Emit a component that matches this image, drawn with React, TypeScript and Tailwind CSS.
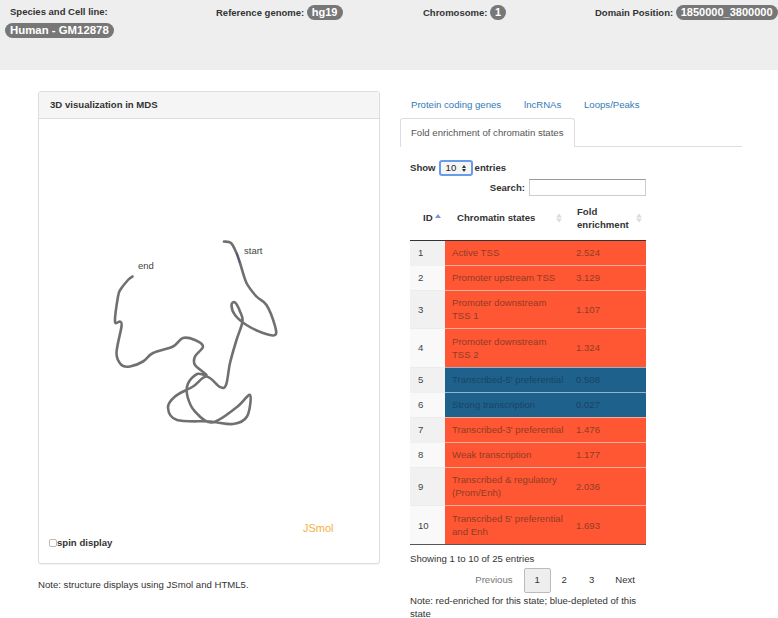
const points: [number, number][] = [
  [224, 241.5], [231, 243], [236.5, 253], [240, 263], [246.5, 283], [256.5, 296.5], [266.5, 305], [275, 326], [275, 335],
  [263, 333], [246.5, 325], [235, 315], [231.5, 305], [235, 302.5], [240, 311.5], [242.5, 321.5], [236.5, 340], [230, 363],
  [226, 385], [220, 387], [206.5, 376.5], [193, 386.5], [175, 396.5], [168, 408], [177, 420], [210, 421.5], [233, 424],
  [247, 416.5], [250, 395], [237, 407], [212, 422.5], [195, 411.5], [187.5, 396.5], [188, 383.5], [197, 374], [206.5, 375],
  [195, 365], [195, 356.5], [203, 346.5], [195, 340], [183, 338], [173, 346.5], [153, 353], [143, 361.5], [130, 366.5], [121.5, 365],
  [116.5, 353], [121.5, 326.5], [120, 321.5], [115, 321.5], [118, 296.5], [120.5, 289.5], [128, 280], [132.5, 276.5],
];

// catmull-rom through the traced points
function smoothPath(pts: [number, number][]) {
  let d = `M${pts[0][0]} ${pts[0][1]}`;
  for (let i = 0; i < pts.length - 1; i++) {
    const p0 = pts[Math.max(i - 1, 0)];
    const p1 = pts[i];
    const p2 = pts[i + 1];
    const p3 = pts[Math.min(i + 2, pts.length - 1)];
    const c1x = p1[0] + (p2[0] - p0[0]) / 6;
    const c1y = p1[1] + (p2[1] - p0[1]) / 6;
    const c2x = p2[0] - (p3[0] - p1[0]) / 6;
    const c2y = p2[1] - (p3[1] - p1[1]) / 6;
    d += ` C${c1x.toFixed(1)} ${c1y.toFixed(1)} ${c2x.toFixed(1)} ${c2y.toFixed(1)} ${p2[0]} ${p2[1]}`;
  }
  return d;
}

const rows = [
  { id: 1, state: "Active TSS", fold: "2.524", blue: false, tall: false },
  { id: 2, state: "Promoter upstream TSS", fold: "3.129", blue: false, tall: false },
  { id: 3, state: "Promoter downstream TSS 1", fold: "1.107", blue: false, tall: true },
  { id: 4, state: "Promoter downstream TSS 2", fold: "1.324", blue: false, tall: true },
  { id: 5, state: "Transcribed-5' preferential", fold: "0.508", blue: true, tall: false },
  { id: 6, state: "Strong transcription", fold: "0.027", blue: true, tall: false },
  { id: 7, state: "Transcribed-3' preferential", fold: "1.476", blue: false, tall: false },
  { id: 8, state: "Weak transcription", fold: "1.177", blue: false, tall: false },
  { id: 9, state: "Transcribed & regulatory (Prom/Enh)", fold: "2.036", blue: false, tall: true },
  { id: 10, state: "Transcribed 5' preferential and Enh", fold: "1.693", blue: false, tall: true },
];

function Badge({ children }: { children: React.ReactNode }) {
  return (
    <span className="inline-block rounded-full bg-[#777] px-[5px] text-[11px] leading-[15px] font-bold text-white">
      {children}
    </span>
  );
}

function SortArrows() {
  return (
    <span className="absolute right-1 top-1/2 flex -translate-y-1/2 flex-col gap-px">
      <span className="h-0 w-0 border-x-[3px] border-b-[4px] border-x-transparent border-b-[#ddd]" />
      <span className="h-0 w-0 border-x-[3px] border-t-[4px] border-x-transparent border-t-[#ddd]" />
    </span>
  );
}

export default function App() {
  return (
    <div className="h-[618px] w-[778px] overflow-hidden bg-white font-['Liberation_Sans',sans-serif] text-[9.6px] leading-[14px] text-[#333]">
      <div className="h-[70px] bg-[#eee] pl-[5px] pt-[5px] text-[9.5px] font-bold">
        <div className="flex">
          <div className="w-[211px] shrink-0 pl-[5px]">Species and Cell line:</div>
          <div className="w-[207px] shrink-0">Reference genome: <Badge>hg19</Badge></div>
          <div className="w-[172px] shrink-0">Chromosome: <Badge>1</Badge></div>
          <div className="shrink-0 whitespace-nowrap">Domain Position: <Badge>1850000_3800000</Badge></div>
        </div>
        <div className="mt-[3px]">
          <span className="inline-block rounded-full bg-[#777] px-[5px] text-[11.4px] leading-[15px] font-bold text-white">Human - GM12878</span>
        </div>
      </div>

      <div className="flex pt-[21px]">
        <div className="ml-[38px] w-[342px]">
          <div className="flex h-[473px] flex-col rounded-[3px] border border-[#ddd] shadow-[0_1px_1px_rgba(0,0,0,0.05)]">
            <div className="flex h-[27px] shrink-0 items-center rounded-t-[3px] border-b border-[#ddd] bg-[#f5f5f5] pl-[11px] font-bold">
              3D visualization in MDS
            </div>
            <div className="relative flex-1">
              <svg className="absolute left-[-39px] top-[-119px] h-[618px] w-[778px]" viewBox="0 0 778 618" fill="none">
                <path d={smoothPath(points)} stroke="#707070" strokeWidth="2.6" strokeLinecap="round" strokeLinejoin="round" />
                <path d="M236.5 253L240 263" stroke="#55557a" strokeWidth="1.6" />
              </svg>
              <span className="absolute left-[205px] top-[125px] text-[9.5px] text-[#444]">start</span>
              <span className="absolute left-[99px] top-[140px] text-[9.5px] text-[#444]">end</span>
              <span className="absolute left-[264px] top-[402px] text-[11px] text-[#f5b041]">JSmol</span>
              <label className="absolute bottom-[13px] left-[10px] flex items-center font-bold">
                <span className="h-[8px] w-[8px] rounded-[2px] border border-[#bbb] bg-white" />
                spin display
              </label>
            </div>
          </div>
          <p className="mt-[14px]">Note: structure displays using JSmol and HTML5.</p>
        </div>

        <div className="ml-[20px] w-[342px]">
          <div className="flex h-[27px] items-center pl-[11px] text-[#337ab7]">
            <span className="w-[113px]">Protein coding genes</span>
            <span className="w-[60px]">lncRNAs</span>
            <span>Loops/Peaks</span>
          </div>
          <div className="flex h-[29px] border-b border-[#ddd]">
            <div className="flex h-[29px] w-[175px] items-center rounded-t-[3px] border border-b-0 border-[#ddd] bg-white pl-[10px] text-[#555]">
              Fold enrichment of chromatin states
            </div>
          </div>

          <div className="ml-[10px] w-[236px]">
            <div className="mt-[13px] flex h-[16px] items-center font-bold">
              Show
              <span className="ml-[3px] mr-[2px] flex h-[16px] w-[34px] items-center justify-between rounded-[3px] border-2 border-[#6a9be8] bg-[#f5f5f5] px-[5px] font-normal text-[#222]">
                10
                <span className="flex flex-col gap-px">
                  <span className="h-0 w-0 border-x-[2px] border-b-[3px] border-x-transparent border-b-[#333]" />
                  <span className="h-0 w-0 border-x-[2px] border-t-[3px] border-x-transparent border-t-[#333]" />
                </span>
              </span>
              entries
            </div>
            <div className="mt-[3px] flex h-[17px] items-center justify-end font-bold">
              Search:
              <span className="ml-[4px] h-[17px] w-[117px] border border-[#ccc] border-t-[#999] bg-white" />
            </div>

            <table className="w-[236px] table-fixed border-collapse text-[9.6px] leading-[13px]">
              <thead>
                <tr className="h-[44px] border-b border-[#333]">
                  <th className="relative w-[35px] pl-[3px] text-left font-bold">
                    <span className="pl-[10px]">ID</span>
                    <span className="absolute right-[4px] top-[18px] h-0 w-0 border-x-[3px] border-b-[4px] border-x-transparent border-b-[#8a8fd8]" />
                  </th>
                  <th className="relative w-[121px] pl-[12px] text-left font-bold">
                    Chromatin states
                    <SortArrows />
                  </th>
                  <th className="relative pl-[11px] text-left font-bold">
                    Fold enrichment
                    <SortArrows />
                  </th>
                </tr>
              </thead>
              <tbody>
                {rows.map((r) => (
                  <tr key={r.id} className={(r.tall ? "h-[38.6px]" : "h-[25px]") + " border-b border-[#eaeaea]/60 last:border-[#555]"}>
                    <td className={(r.id % 2 ? "bg-[#f1f1f1]" : "bg-[#f9f9f9]") + " pl-[8px] text-[#444]"}>{r.id}</td>
                    <td className={(r.blue ? "bg-[#1f618d] text-[#184563]" : "bg-[#ff5733] text-[#913c26]") + " pl-[7px]"}>{r.state}</td>
                    <td className={(r.blue ? "bg-[#1f618d] text-[#184563]" : "bg-[#ff5733] text-[#913c26]") + " pl-[10px]"}>{r.fold}</td>
                  </tr>
                ))}
              </tbody>
            </table>

            <div className="mt-[7px]">Showing 1 to 10 of 25 entries</div>
            <div className="mt-[2px] flex h-[25px] items-center justify-end pr-[11px]">
              <span className="mr-[11px] text-[#777]">Previous</span>
              <span className="flex h-[25px] w-[27px] items-center justify-center rounded-[2px] border border-[#bbb] bg-[#eee]">1</span>
              <span className="ml-[11px]">2</span>
              <span className="ml-[22px]">3</span>
              <span className="ml-[21px]">Next</span>
            </div>
            <p className="mt-px w-[236px] leading-[13px]">Note: red-enriched for this state; blue-depleted of this state</p>
          </div>
        </div>
      </div>
    </div>
  );
}
